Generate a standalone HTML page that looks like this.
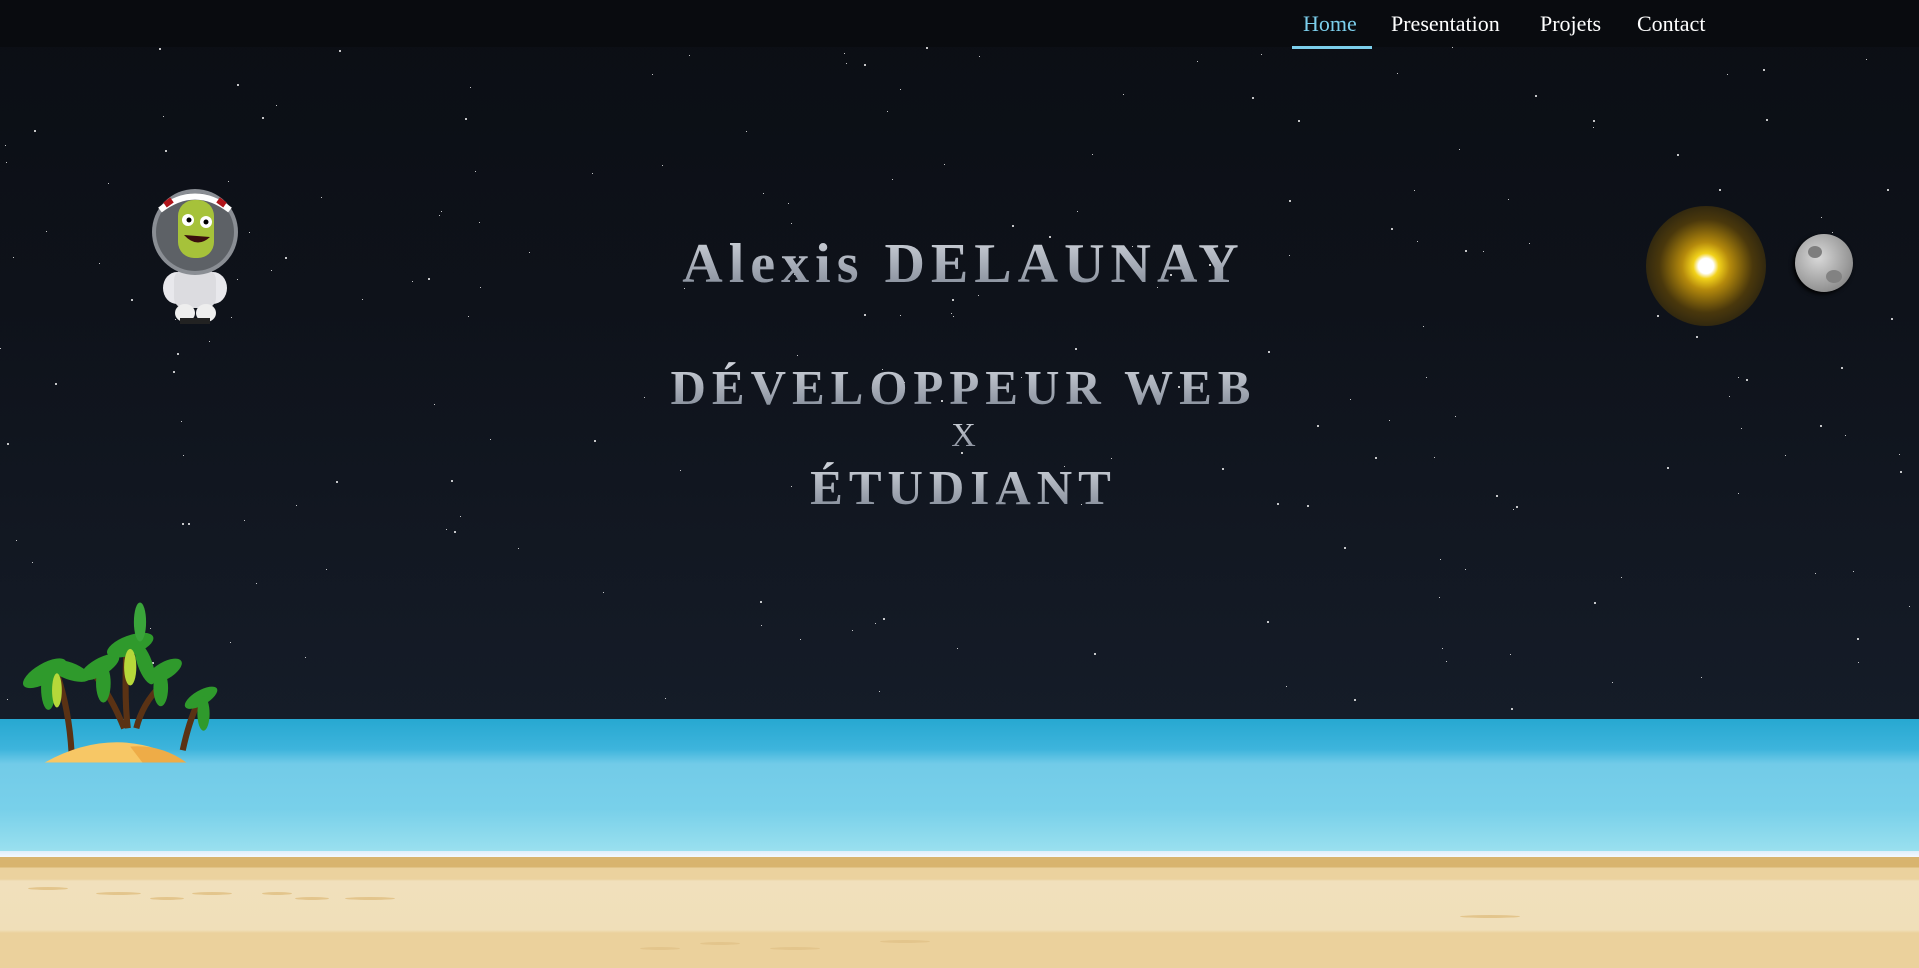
<!DOCTYPE html>
<html><head><meta charset="utf-8"><style>
*{margin:0;padding:0;box-sizing:border-box}
html,body{width:1919px;height:968px;overflow:hidden}
body{position:relative;background:linear-gradient(#0b0e14 0,#0e121a 300px,#151c28 719px);font-family:"Liberation Serif",serif}
nav{position:absolute;left:0;top:0;width:1919px;height:47px;background:#090b0f}
nav a{position:absolute;top:11px;font-size:22px;color:#fff;text-decoration:none}
.ul{position:absolute;left:1292px;top:46px;width:80px;height:3px;background:#7ccfec}
.star{position:absolute;left:0;top:0;width:2px;height:2px;background:#fff;border-radius:1px}
.t{position:absolute;left:4px;width:1919px;text-align:center;font-weight:bold;color:#aab0ba;
background:linear-gradient(#d4d8df,#7b8391);-webkit-background-clip:text;background-clip:text;-webkit-text-fill-color:transparent}
.sea{position:absolute;left:0;top:719px;width:1919px;height:140px;background:linear-gradient(#27a8d1 0,#3db4dc 30px,#72cbe8 45px,#78d0ea 90px,#98dfee 130px,#a0e2ef 135px)}
.foam{position:absolute;left:0;top:851px;width:1919px;height:6px;background:linear-gradient(#dfeefa,#f4f9fe)}
.sand{position:absolute;left:0;top:857px;width:1919px;height:111px;background:linear-gradient(#d8b46e 0,#d8b46e 10px,#ebd29e 11px,#ebd29e 22px,#f1e0bc 24px,#f0dfb9 73px,#ebd19c 76px)}
.fp{position:absolute;height:3px;border-radius:50%;background:#e3c58c}
</style></head><body>
<div id="stars"></div>
<nav>
<a style="left:1303px;color:#7ccfec">Home</a>
<a style="left:1391px">Presentation</a>
<a style="left:1540px">Projets</a>
<a style="left:1637px">Contact</a>
<div class="ul"></div>
</nav>

<div class="t" style="top:232px;font-size:56px;letter-spacing:6px">Alexis DELAUNAY</div>
<div class="t" style="top:359px;font-size:49px;letter-spacing:6px">DÉVELOPPEUR WEB</div>
<div class="t" style="top:417px;font-size:34px;font-weight:normal">X</div>
<div class="t" style="top:459px;font-size:49px;letter-spacing:6px">ÉTUDIANT</div>

<!-- sun -->
<div style="position:absolute;left:1646px;top:206px;width:120px;height:120px;border-radius:50%;background:radial-gradient(circle at center,#fff 0,#fff 9%,#f2d21a 15%,#b58a0c 28%,#4a380c 55%,#1c1a12 85%,rgba(20,20,20,0) 100%)"></div>
<!-- moon -->
<div style="position:absolute;left:1795px;top:234px;width:58px;height:58px;border-radius:50%;background:radial-gradient(circle at 40% 40%,#d9d9d9,#9c9c9c 60%,#707070);box-shadow:-2px 2px 4px #000"></div>
<div style="position:absolute;left:1808px;top:246px;width:14px;height:12px;border-radius:50%;background:#7e7e7e"></div>
<div style="position:absolute;left:1826px;top:270px;width:16px;height:13px;border-radius:50%;background:#828282"></div>

<!-- astronaut -->
<svg style="position:absolute;left:140px;top:185px" width="110" height="145" viewBox="0 0 110 145">
<ellipse cx="37" cy="103" rx="14" ry="16" fill="#e8e8ec"/>
<ellipse cx="73" cy="103" rx="14" ry="16" fill="#e8e8ec"/>
<rect x="34" y="85" width="42" height="38" rx="10" fill="#dcdce0"/>
<ellipse cx="45" cy="128" rx="10" ry="9" fill="#eee"/>
<ellipse cx="66" cy="128" rx="10" ry="9" fill="#eee"/>
<rect x="40" y="133" width="30" height="6" fill="#222"/>
<circle cx="55" cy="47" r="43" fill="#8a8e94"/>
<circle cx="55" cy="47" r="39" fill="#5d6166"/>
<path d="M20 25 Q55 -2 90 25" stroke="#fff" stroke-width="6" fill="none"/>
<path d="M25 20 L32 15 M78 15 L85 20" stroke="#b0151a" stroke-width="6"/>
<rect x="38" y="15" width="36" height="58" rx="16" fill="#a6c23a"/>
<circle cx="48" cy="35" r="6" fill="#fff"/><circle cx="49" cy="35" r="2.5" fill="#000"/>
<circle cx="66" cy="37" r="6" fill="#fff"/><circle cx="66" cy="37" r="2.5" fill="#000"/>
<path d="M44 50 Q57 64 70 52 Z" fill="#3a0d0d"/>
</svg>

<div class="sea"></div>
<!-- island -->
<svg style="position:absolute;left:8px;top:600px" width="220" height="171" viewBox="0 0 180 140">
<g stroke="#5a3214" stroke-width="5" fill="none">
<path d="M40 60 Q50 90 52 125"/><path d="M70 60 Q85 80 95 105"/><path d="M97 40 Q95 80 98 105"/><path d="M125 70 Q110 85 105 105"/><path d="M155 85 Q148 100 143 123"/>
</g>
<g fill="#2f9a2c">
<ellipse cx="30" cy="60" rx="20" ry="8" transform="rotate(-30 30 60)"/><ellipse cx="50" cy="58" rx="18" ry="7" transform="rotate(20 50 58)"/><ellipse cx="33" cy="72" rx="6" ry="18"/>
<ellipse cx="75" cy="55" rx="18" ry="7" transform="rotate(-30 75 55)"/><ellipse cx="78" cy="68" rx="6" ry="16"/>
<ellipse cx="100" cy="37" rx="20" ry="8" transform="rotate(-20 100 37)"/><ellipse cx="112" cy="52" rx="6" ry="18" transform="rotate(-20 112 52)"/><ellipse cx="108" cy="18" rx="5" ry="16" fill="#3aa53a"/>
<ellipse cx="128" cy="58" rx="16" ry="7" transform="rotate(-30 128 58)"/><ellipse cx="125" cy="72" rx="6" ry="15"/>
<ellipse cx="158" cy="80" rx="15" ry="6" transform="rotate(-30 158 80)"/><ellipse cx="160" cy="93" rx="5" ry="14"/>
</g>
<g fill="#b6d83a"><ellipse cx="100" cy="55" rx="5" ry="15"/><ellipse cx="40" cy="74" rx="4" ry="14"/></g>
<path d="M30 133 Q90 100 146 133 Z" fill="#f7c765"/>
<path d="M100 120 Q125 118 146 133 L110 133 Z" fill="#eeac47"/>
</svg>
<div class="foam"></div>
<div class="sand"></div>
<div class="fp" style="left:28px;top:887px;width:40px"></div>
<div class="fp" style="left:96px;top:892px;width:45px"></div>
<div class="fp" style="left:150px;top:897px;width:34px"></div>
<div class="fp" style="left:192px;top:892px;width:40px"></div>
<div class="fp" style="left:262px;top:892px;width:30px"></div>
<div class="fp" style="left:295px;top:897px;width:34px"></div>
<div class="fp" style="left:345px;top:897px;width:50px"></div>
<div class="fp" style="left:640px;top:947px;width:40px"></div>
<div class="fp" style="left:700px;top:942px;width:40px"></div>
<div class="fp" style="left:770px;top:947px;width:50px"></div>
<div class="fp" style="left:880px;top:940px;width:50px"></div>
<div class="fp" style="left:1460px;top:915px;width:60px"></div>

<script>
var s="",seed=7;function r(){seed=(seed*9301+49297)%233280;return seed/233280}
for(var i=0;i<220;i++){var x=Math.floor(r()*1919),y=Math.floor(r()*715),z=r()<0.3?2:1;
s+='<div class="star" style="left:'+x+'px;top:'+y+'px;width:'+z+'px;height:'+z+'px"></div>'}
document.getElementById("stars").innerHTML=s;
</script>
</body></html>
